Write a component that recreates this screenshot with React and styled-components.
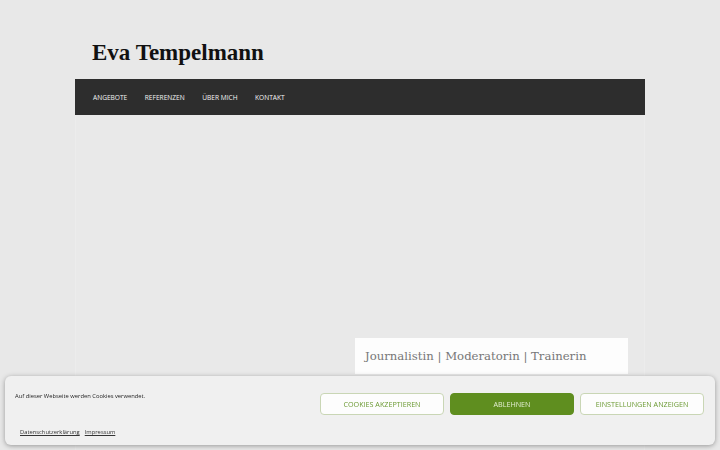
import React from "react";
import styled, { createGlobalStyle } from "styled-components";

const Global = createGlobalStyle`
  html, body { margin: 0; padding: 0; }
  body {
    background: #e8e8e8;
    font-family: "Open Sans", "Liberation Sans", sans-serif;
    height: 450px;
    overflow: hidden;
  }
`;

const Page = styled.div`
  width: 570px;
  margin: 0 auto;
`;

const Header = styled.header`
  padding: 38px 17px 12px;
`;

const SiteTitle = styled.h1`
  margin: 0;
  font-family: "Liberation Serif", serif;
  font-weight: 700;
  font-size: 23px;
  line-height: 29px;
  color: #111;
`;

const Nav = styled.nav`
  height: 36px;
  background: #2d2d2d;
  display: flex;
  align-items: center;
  padding-left: 18px;
  gap: 17.5px;
`;

const NavItem = styled.a`
  color: #f4f4f4;
  font-size: 6.6px;
  text-transform: uppercase;
  text-decoration: none;
`;

const Content = styled.main`
  height: 335px;
  box-sizing: border-box;
  background: #e9e9e9;
  border-left: 1px solid #ececec;
  border-right: 1px solid #ececec;
  display: flex;
  justify-content: flex-end;
  align-items: flex-start;
  padding: 223px 16px 0 0;
`;

const Tagline = styled.div`
  width: 263px;
  padding: 8px 0 8px 10px;
  background: #fdfdfd;
  font-family: "DejaVu Serif", serif;
  font-size: 11.7px;
  color: #777;
  line-height: 20px;
`;

const Banner = styled.div`
  position: fixed;
  left: 5px;
  right: 5px;
  bottom: 5px;
  height: 69px;
  background: #f0f0f0;
  border-radius: 6px;
  box-shadow: 0 1px 5px rgba(0, 0, 0, 0.35);
  display: grid;
  grid-template-columns: 1fr auto;
  box-sizing: border-box;
  padding: 16px 11px 0 10px;
`;

const BannerText = styled.div`
  display: flex;
  flex-direction: column;
  justify-content: space-between;
  padding-bottom: 9px;
`;

const Message = styled.p`
  margin: 0;
  font-size: 5.8px;
  color: #222;
`;

const Links = styled.div`
  display: flex;
  gap: 5px;
  padding-left: 5px;
`;

const Link = styled.a`
  font-size: 5.8px;
  color: #333;
  text-decoration: underline;
`;

const Buttons = styled.div`
  display: flex;
  gap: 6px;
  align-items: flex-start;
  padding-top: 1px;
`;

const Button = styled.button`
  width: 124px;
  height: 22px;
  border-radius: 4px;
  font-family: "Open Sans", sans-serif;
  font-size: 7.2px;
  text-transform: uppercase;
  cursor: pointer;
  border: 1px solid ${(p) => (p.$primary ? "#5f8e1f" : "#c9d6b5")};
  background: ${(p) => (p.$primary ? "#5f8e1f" : "#fdfdfd")};
  color: ${(p) => (p.$primary ? "#e3eed2" : "#6c9a34")};
  padding: 0;
`;

export default function App() {
  return (
    <>
      <Global />
      <Page>
        <Header>
          <SiteTitle>Eva Tempelmann</SiteTitle>
        </Header>
        <Nav>
          <NavItem>Angebote</NavItem>
          <NavItem>Referenzen</NavItem>
          <NavItem>Über mich</NavItem>
          <NavItem>Kontakt</NavItem>
        </Nav>
        <Content>
          <Tagline>Journalistin | Moderatorin | Trainerin</Tagline>
        </Content>
      </Page>
      <Banner>
        <BannerText>
          <Message>Auf dieser Webseite werden Cookies verwendet.</Message>
          <Links>
            <Link>Datenschutzerklärung</Link>
            <Link>Impressum</Link>
          </Links>
        </BannerText>
        <Buttons>
          <Button>Cookies akzeptieren</Button>
          <Button $primary>Ablehnen</Button>
          <Button>Einstellungen anzeigen</Button>
        </Buttons>
      </Banner>
    </>
  );
}
